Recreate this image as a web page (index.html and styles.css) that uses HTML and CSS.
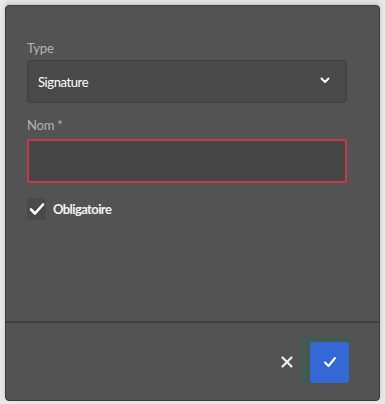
FILE: index.html
```html
<!DOCTYPE html>
<html lang="fr">

<head>
    <meta charset="UTF-8">
    <title>Champ</title>
    <link rel="stylesheet" href="styles.css">
</head>

<body>
    <div class="panel">
        <div class="panel-body">
            <label class="field-label">Type</label>
            <div class="select">
                <span>Signature</span>
                <svg class="chevron" width="10" height="7" viewBox="0 0 10 7">
                    <path d="M1.5 1.5 L5 5 L8.5 1.5" fill="none" stroke="#fff" stroke-width="2" stroke-linecap="round" stroke-linejoin="round"/>
                </svg>
            </div>

            <label class="field-label label-nom">Nom *</label>
            <div class="input invalid"></div>

            <div class="check-row">
                <span class="checkbox">
                    <svg width="16" height="14" viewBox="0 0 16 14">
                        <path d="M2 7.5 L6 11.5 L14 2.5" fill="none" stroke="#fff" stroke-width="2.6" stroke-linecap="round" stroke-linejoin="round"/>
                    </svg>
                </span>
                <span class="check-text">Obligatoire</span>
            </div>
        </div>

        <div class="panel-footer">
            <span class="cancel">
                <svg width="14" height="14" viewBox="0 0 14 14">
                    <path d="M2.5 2.5 L11.5 11.5 M11.5 2.5 L2.5 11.5" stroke="#f0f0f0" stroke-width="2.2" stroke-linecap="round"/>
                </svg>
            </span>
            <span class="ok-wrap">
                <span class="ok">
                    <svg width="16" height="14" viewBox="0 0 16 14">
                        <path d="M3 7.5 L6.5 11 L13 3" fill="none" stroke="#fff" stroke-width="2" stroke-linecap="round" stroke-linejoin="round"/>
                    </svg>
                </span>
            </span>
        </div>
    </div>
</body>

</html>
```

FILE: styles.css
```css
* {
    margin: 0;
    padding: 0;
    box-sizing: border-box;
}

body {
    background: #e8e8e8;
    padding: 5px 5px 3px 5px;
    font-family: "Lato", "Open Sans", sans-serif;
    height: 404px;
}

.panel {
    width: 375px;
    height: 396px;
    background: #535353;
    border: 1px solid #3b3b3b;
    border-radius: 4px;
    box-shadow: 0 -2px 4px rgba(0, 0, 0, .15);
    display: flex;
    flex-direction: column;
}

.panel-body {
    height: 317px;
    padding: 34px 32px 0 21px;
    display: flex;
    flex-direction: column;
    border-bottom: 2px solid #3e3e3e;
}

.field-label {
    font-size: 13px;
    line-height: 16px;
    color: #b3b3b3;
    height: 16px;
    letter-spacing: -0.2px;
}

.select {
    margin-top: 4px;
    height: 43px;
    background: #494949;
    border: 1px solid #3f3f3f;
    border-radius: 4px;
    display: flex;
    align-items: center;
    justify-content: space-between;
    padding: 0 16px 0 10px;
    color: #fff;
    font-size: 13px;
    letter-spacing: -0.4px;
}

.chevron {
    margin-top: -2px;
}

.label-nom {
    margin-top: 14px;
}

.input {
    margin-top: 6px;
    height: 44px;
    background: #464646;
    border: 1px solid #3d3d3d;
    border-radius: 2px;
}

.input.invalid {
    border: 2px solid #c23b4b;
}

.check-row {
    margin-top: 15px;
    display: flex;
    align-items: center;
    gap: 7px;
}

.checkbox {
    width: 19px;
    height: 22px;
    background: #4a4a4a;
    border-radius: 2px;
    display: flex;
    align-items: center;
    justify-content: center;
}

.check-text {
    font-size: 13px;
    font-weight: bold;
    color: #f2f2f2;
    letter-spacing: -0.6px;
}

.panel-footer {
    flex: 1;
    display: flex;
    align-items: center;
    justify-content: flex-end;
    padding: 0 29px 0 0;
    gap: 7px;
}

.cancel {
    display: flex;
    width: 16px;
    justify-content: center;
}

.ok-wrap {
    display: flex;
    padding: 6px 1px 1px 8px;
    background: #435a52;
    margin-top: -4px;
}

.ok {
    width: 39px;
    height: 41px;
    background: #3568d4;
    border-radius: 3px;
    display: flex;
    align-items: center;
    justify-content: center;
}
```
